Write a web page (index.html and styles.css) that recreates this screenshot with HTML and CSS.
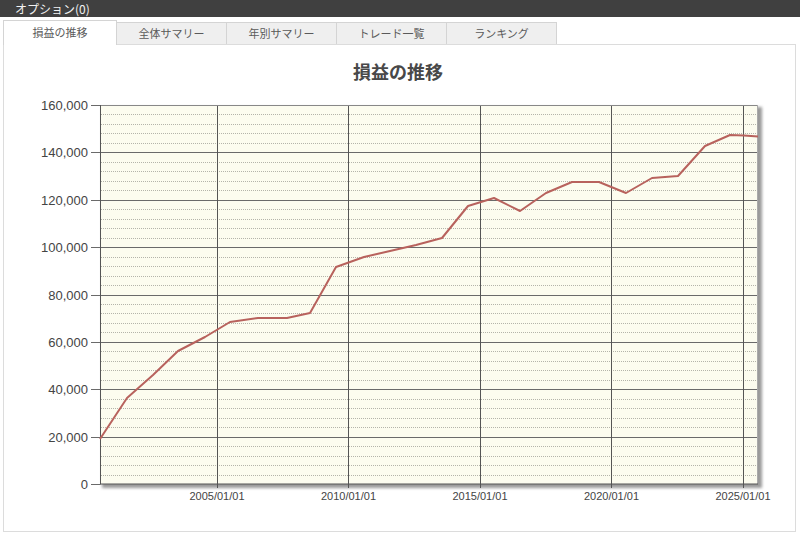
FILE: index.html
```html
<!DOCTYPE html>
<html lang="ja">
<head>
<meta charset="utf-8">
<title>損益の推移</title>
<link rel="stylesheet" href="styles.css">
</head>
<body>
<div class="topbar">オプション(0)</div>
<div class="tabs">
  <div class="tab active">損益の推移</div>
  <div class="tab">全体サマリー</div>
  <div class="tab">年別サマリー</div>
  <div class="tab">トレード一覧</div>
  <div class="tab">ランキング</div>
</div>
<div class="panel">
  <svg class="chart" width="791" height="486" viewBox="4 45 791 486" xmlns="http://www.w3.org/2000/svg">
    <defs>
      <filter id="sh" x="-5%" y="-5%" width="110%" height="110%">
        <feGaussianBlur stdDeviation="1.5"/>
      </filter>
    </defs>
    <text class="title" x="398" y="79" text-anchor="middle">損益の推移</text>
    <rect x="102" y="107" width="660" height="381" fill="#9a9a9a" filter="url(#sh)"/>
    <rect x="100" y="105" width="658" height="379" fill="#fcfcef"/>
    <path class="minor" d="M101 114.5H757M101 124.5H757M101 133.5H757M101 143.5H757
      M101 162.5H757M101 171.5H757M101 181.5H757M101 190.5H757
      M101 209.5H757M101 219.5H757M101 228.5H757M101 238.5H757
      M101 257.5H757M101 266.5H757M101 276.5H757M101 285.5H757
      M101 304.5H757M101 313.5H757M101 323.5H757M101 332.5H757
      M101 351.5H757M101 361.5H757M101 370.5H757M101 380.5H757
      M101 399.5H757M101 408.5H757M101 418.5H757M101 427.5H757
      M101 446.5H757M101 456.5H757M101 465.5H757M101 475.5H757"/>
    <path class="major" d="M91 105.5H100M91 152.5H757M91 200.5H757M91 247.5H757M91 295.5H757M91 342.5H757M91 389.5H757M91 437.5H757M91 484.5H100"/>
    <path class="vgrid" d="M217.5 105V488M348.5 105V488M480.5 105V488M611.5 105V488M743.5 105V488"/>
    <line x1="100" y1="105.5" x2="758" y2="105.5" stroke="#888"/>
    <line x1="757.5" y1="105" x2="757.5" y2="484" stroke="#aaa"/>
    <line x1="100.5" y1="105" x2="100.5" y2="484.5" stroke="#555"/>
    <line x1="100" y1="484" x2="758" y2="484" stroke="#555"/>
    <polyline class="series"
      points="100,439 127,398 153,375 178,351 205,337 230,322 258,318 287,318 310,313 336,267 364,257 390,251 416,245 442,238 468,206 494,198 520,211 546,193 572,182 599,182 626,193 652,178 678,176 705,146 730,135 744,135.5 758,136.5"/>
    <g class="ylab" text-anchor="end">
      <text x="88" y="110">160,000</text>
      <text x="88" y="157.4">140,000</text>
      <text x="88" y="204.8">120,000</text>
      <text x="88" y="252.1">100,000</text>
      <text x="88" y="299.5">80,000</text>
      <text x="88" y="346.9">60,000</text>
      <text x="88" y="394.3">40,000</text>
      <text x="88" y="441.6">20,000</text>
      <text x="88" y="489">0</text>
    </g>
    <g class="xlab" text-anchor="middle">
      <text x="217" y="500">2005/01/01</text>
      <text x="348.5" y="500">2010/01/01</text>
      <text x="480" y="500">2015/01/01</text>
      <text x="611.5" y="500">2020/01/01</text>
      <text x="743" y="500">2025/01/01</text>
    </g>
  </svg>
</div>
</body>
</html>
```

FILE: styles.css
```css
html, body {
  margin: 0;
  padding: 0;
  background: #fff;
}
body {
  width: 800px;
  height: 537px;
  overflow: hidden;
  font-family: "Noto Sans CJK JP", "Liberation Sans", sans-serif;
}
.topbar {
  height: 17px;
  line-height: 17px;
  background: #404040;
  color: #f2f2f2;
  font-size: 12px;
  padding-left: 15px;
}
.tabs {
  display: flex;
  align-items: flex-end;
  height: 27px;
  padding-left: 3px;
  box-sizing: border-box;
}
.tab {
  width: 110px;
  height: 22px;
  box-sizing: border-box;
  border: 1px solid #d4d4d4;
  border-bottom: none;
  border-left: none;
  background: #efefef;
  color: #5a5a5a;
  font-size: 11px;
  line-height: 21px;
  text-align: center;
}
.tab.active {
  width: 114px;
  height: 25px;
  margin-bottom: -1px;
  border-left: 1px solid #d4d4d4;
  background: #fff;
  line-height: 22px;
  position: relative;
  z-index: 1;
}
.panel {
  margin-left: 3px;
  width: 793px;
  height: 488px;
  box-sizing: border-box;
  border: 1px solid #dcdcdc;
}
.chart {
  display: block;
}
.title {
  font-family: "Noto Sans CJK JP", sans-serif;
  font-weight: bold;
  font-size: 18px;
  fill: #484848;
}
.minor {
  fill: none;
  stroke: #b4b4aa;
  stroke-width: 1;
  stroke-dasharray: 1 1;
}
.major {
  fill: none;
  stroke: #6a6a6a;
  stroke-width: 1;
}
.vgrid {
  fill: none;
  stroke: #555;
  stroke-width: 1;
}
.series {
  fill: none;
  stroke: #b8625d;
  stroke-width: 2;
  stroke-linejoin: round;
}
.ylab text {
  font-family: "Liberation Sans", Arial, sans-serif;
  font-size: 13px;
  fill: #444;
}
.xlab text {
  font-family: "Liberation Sans", Arial, sans-serif;
  font-size: 11px;
  fill: #444;
}
```
